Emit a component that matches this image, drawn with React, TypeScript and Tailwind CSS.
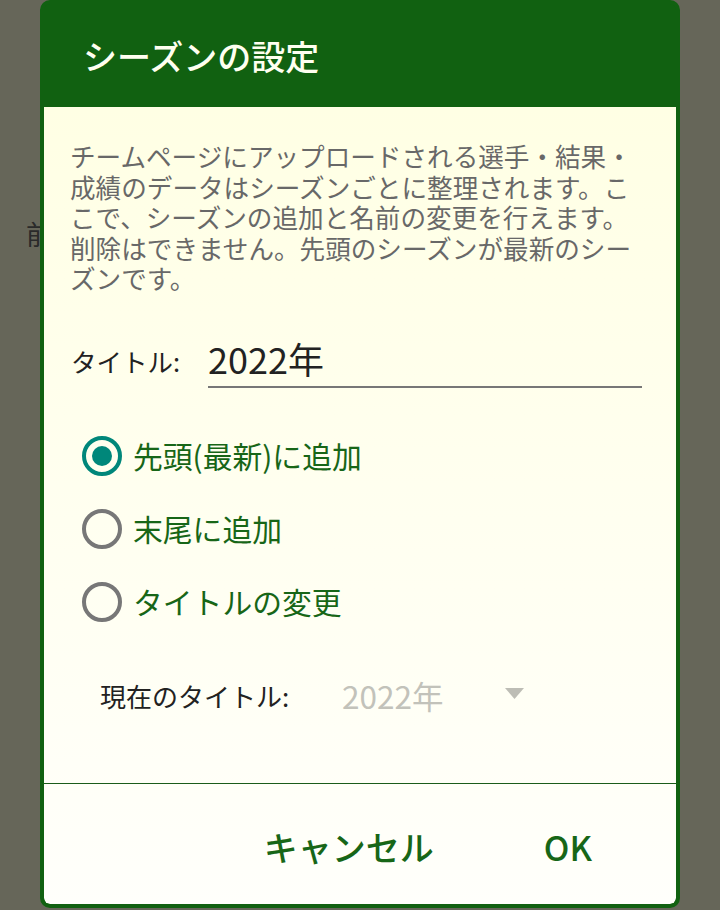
const jp = "font-['Noto_Sans_CJK_JP','Noto_Sans',sans-serif]";

const descLines = [
  "チームページにアップロードされる選手・結果・",
  "成績のデータはシーズンごとに整理されます。こ",
  "こで、シーズンの追加と名前の変更を行えます。",
  "削除はできません。先頭のシーズンが最新のシー",
  "ズンです。"
];

const options = ["先頭(最新)に追加", "末尾に追加", "タイトルの変更"];

function Radio({ checked }: { checked: boolean }) {
  return (
    <span
      className={`flex h-[40px] w-[40px] shrink-0 items-center justify-center rounded-full border-4 ${
        checked ? "border-[#00877a]" : "border-[#777777]"
      }`}
    >
      {checked && <span className="h-[20px] w-[20px] rounded-full bg-[#00877a]" />}
    </span>
  );
}

/** Season settings dialog shown over the dimmed page. */
export default function App() {
  return (
    <div className={`relative h-[910px] w-[720px] overflow-hidden bg-[#666659] ${jp}`}>
      {/* page behind the dialog */}
      <div className="pl-[26px] pt-[216px] text-[27px] leading-[36px] text-[#2a2a2a]">前</div>

      <div className="absolute left-[40px] top-0 flex h-[908px] w-[640px] flex-col overflow-hidden rounded-[10px] border-4 border-[#116111] bg-[#116111]">
        <div className="flex h-[103px] shrink-0 items-center pl-[39px] text-[34px] font-medium text-[#fffff0]">
          シーズンの設定
        </div>

        <div className="flex flex-1 flex-col rounded-b-[6px] bg-linear-to-b from-[#ffffe4] to-[#fffffb]">
          <p className="whitespace-nowrap pl-[26px] pt-[34px] text-[25.6px] leading-[30.5px] text-[#686868]">
            {descLines.map((line, i) => (
              <span key={line}>
                {line}
                {i < descLines.length - 1 && <br />}
              </span>
            ))}
          </p>

          <div className="mt-[40px] flex h-[54px] items-center pl-[27px]">
            <span className="w-[137px] text-[25.5px] leading-none text-[#222222]">
              タイトル:
            </span>
            <div className="flex h-[54px] w-[434px] items-center border-b-2 border-[#777777] pb-[4px] text-[36px] leading-none text-[#222222]">
              2022年
            </div>
          </div>

          <div className="mt-[32px] flex flex-col pl-[38px]">
            {options.map((label, i) => (
              <div key={label} className="flex h-[73px] items-center gap-[11px]">
                <Radio checked={i === 0} />
                <span className="text-[29.8px] leading-none text-[#176617]">{label}</span>
              </div>
            ))}
          </div>

          <div className="mt-[32px] flex h-[50px] items-center pl-[56px]">
            <span className="w-[242px] text-[26px] leading-none text-[#222222]">
              現在のタイトル:
            </span>
            <span className="w-[163px] text-[31.5px] leading-none text-[#c2c2ba]">2022年</span>
            <svg width="19" height="11" viewBox="0 0 19 11" className="mt-[-4px]">
              <path d="M0 0 L19 0 L9.5 11 Z" fill="#bdbdb5" />
            </svg>
          </div>

          <div className="flex-1" />
          <div className="h-px bg-[#1a5c1a]" />

          <div className="flex h-[120px] items-center justify-end gap-[110px] pr-[84px] pt-[6px] text-[34px] font-medium leading-none text-[#176617]">
            <span>キャンセル</span>
            <span>OK</span>
          </div>
        </div>
      </div>
    </div>
  );
}
